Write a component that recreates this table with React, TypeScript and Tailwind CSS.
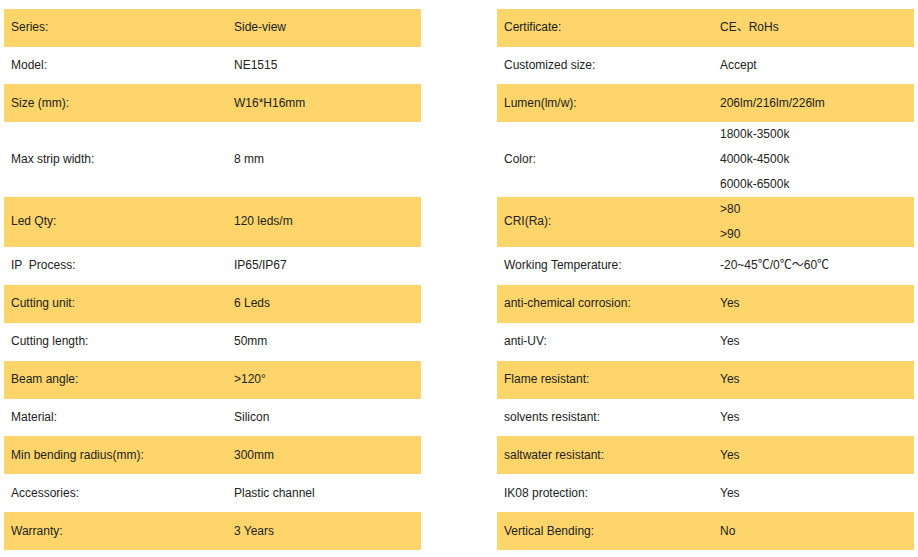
type Row = { label: string; values: string[]; h: string }

const left: Row[] = [
  { label: 'Series:', values: ['Side-view'], h: 'h-[37.7px]' },
  { label: 'Model:', values: ['NE1515'], h: 'h-[37.7px]' },
  { label: 'Size (mm):', values: ['W16*H16mm'], h: 'h-[37.6px]' },
  { label: 'Max strip width:', values: ['8 mm'], h: 'h-[75px]' },
  { label: 'Led Qty:', values: ['120 leds/m'], h: 'h-[50px]' },
  { label: 'IP  Process:', values: ['IP65/IP67'], h: 'h-[37.9px]' },
  { label: 'Cutting unit:', values: ['6 Leds'], h: 'h-[37.9px]' },
  { label: 'Cutting length:', values: ['50mm'], h: 'h-[37.9px]' },
  { label: 'Beam angle:', values: ['>120°'], h: 'h-[37.9px]' },
  { label: 'Material:', values: ['Silicon'], h: 'h-[37.9px]' },
  { label: 'Min bending radius(mm):', values: ['300mm'], h: 'h-[37.9px]' },
  { label: 'Accessories:', values: ['Plastic channel'], h: 'h-[37.9px]' },
  { label: 'Warranty:', values: ['3 Years'], h: 'h-[37.9px]' },
]

const right: Row[] = [
  { label: 'Certificate:', values: ['CE、RoHs'], h: 'h-[37.7px]' },
  { label: 'Customized size:', values: ['Accept'], h: 'h-[37.7px]' },
  { label: 'Lumen(lm/w):', values: ['206lm/216lm/226lm'], h: 'h-[37.6px]' },
  { label: 'Color:', values: ['1800k-3500k', '4000k-4500k', '6000k-6500k'], h: 'h-[75px]' },
  { label: 'CRI(Ra):', values: ['>80', '>90'], h: 'h-[50px]' },
  { label: 'Working Temperature:', values: ['-20~45℃/0℃～60℃'], h: 'h-[37.9px]' },
  { label: 'anti-chemical corrosion:', values: ['Yes'], h: 'h-[37.9px]' },
  { label: 'anti-UV:', values: ['Yes'], h: 'h-[37.9px]' },
  { label: 'Flame resistant:', values: ['Yes'], h: 'h-[37.9px]' },
  { label: 'solvents resistant:', values: ['Yes'], h: 'h-[37.9px]' },
  { label: 'saltwater resistant:', values: ['Yes'], h: 'h-[37.9px]' },
  { label: 'IK08 protection:', values: ['Yes'], h: 'h-[37.9px]' },
  { label: 'Vertical Bending:', values: ['No'], h: 'h-[37.9px]' },
]

function SpecTable({ rows, labelW }: { rows: Row[]; labelW: string }) {
  return (
    <div className="flex w-[417px] flex-col">
      {rows.map((r, i) => (
        <div
          key={r.label}
          className={`flex items-center ${r.h} ${i % 2 === 0 ? 'bg-[#fdd56b]' : 'bg-white'}`}
        >
          <div className={`${labelW} shrink-0 whitespace-pre pl-[7px] leading-[25px]`}>{r.label}</div>
          <div className="flex flex-col">
            {r.values.map((v) => (
              <span key={v} className="leading-[25px]">{v}</span>
            ))}
          </div>
        </div>
      ))}
    </div>
  )
}

export default function App() {
  return (
    <div
      className="flex h-[557px] w-[918px] justify-between bg-white px-[4px] pt-[9px] text-[12px] text-[#222]"
      style={{ fontFamily: '"Liberation Sans", Arial, "Noto Sans CJK SC", sans-serif' }}
    >
      <SpecTable rows={left} labelW="w-[230px]" />
      <SpecTable rows={right} labelW="w-[223px]" />
    </div>
  )
}
